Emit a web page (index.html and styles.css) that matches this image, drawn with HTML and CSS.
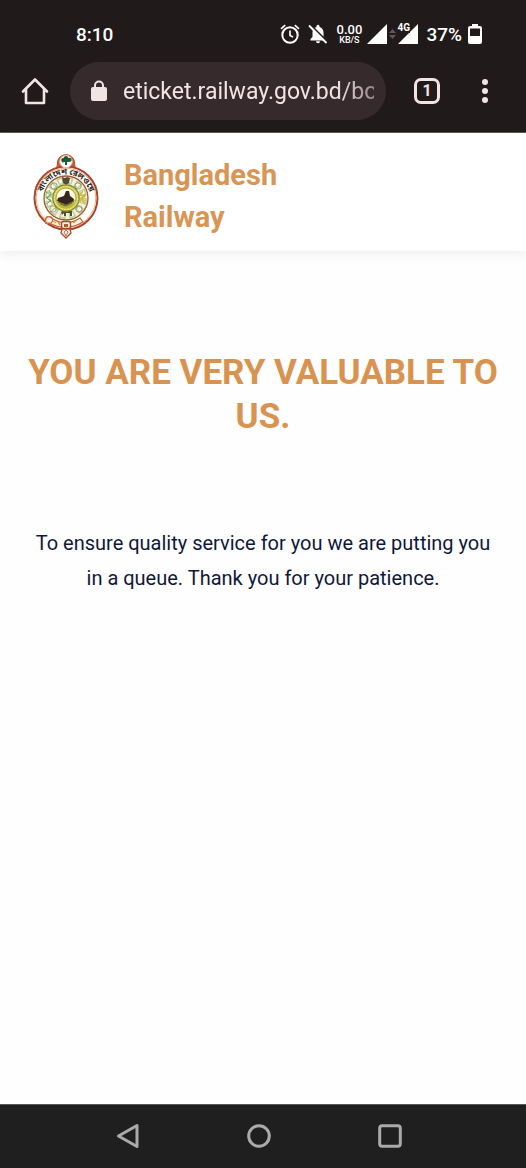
FILE: index.html
```html
<!DOCTYPE html>
<html lang="en">
<head>
<meta charset="utf-8">
<meta name="viewport" content="width=device-width, initial-scale=1">
<title>Bangladesh Railway</title>
<link rel="stylesheet" href="styles.css">
</head>
<body>
<div class="status-bar">
  <time class="clock">8:10</time>
  <div class="indicators">
    <svg class="alarm" width="20" height="20" viewBox="0 0 20 20" fill="none" stroke="currentColor" stroke-width="2"><circle cx="10" cy="11" r="7.7"/><path d="M10 6.5V11.5L13 13M1 4.8L5.2 1.2M19 4.8L14.8 1.2" stroke-width="1.7"/></svg>
    <svg class="bell" width="20" height="20" viewBox="0 0 20 20"><path fill="currentColor" d="M2.5 16.5V15L4.500 13V8.500C4.500 5.500 6 3.700 8.500 3V2.300a1.500 1.500 0 0 1 3 0V3C14 3.700 15.500 5.500 15.500 8.500V13l2 2v1.500zM8 17.300h4a2 2 0 0 1-4 0z"/><path d="M2 0.500L20 18.500" stroke="#211a1b" stroke-width="2"/><path d="M1 1.500L18.500 19" stroke="currentColor" stroke-width="2"/></svg>
    <div class="speed"><span>0.00</span><small>KB/S</small></div>
    <div class="signals">
      <svg width="20" height="20" viewBox="0 0 20 20"><path fill="currentColor" d="M20 0V20H0z"/></svg>
      <svg class="traffic" width="7" height="10" viewBox="0 0 7 10"><path fill="#5f595a" d="M0 4L3.500 0L7 4zM0 6H7L3.500 10z"/></svg>
      <div class="mobile"><svg width="20" height="20" viewBox="0 0 20 20"><path fill="currentColor" d="M20 0V20H0z"/></svg><span class="network">4G</span></div>
    </div>
    <span class="percent">37%</span>
    <svg class="battery" width="14" height="20" viewBox="0 0 14 20"><path fill="currentColor" fill-rule="evenodd" d="M4 0h6v2h2a2 2 0 0 1 2 2v14a2 2 0 0 1-2 2H2a2 2 0 0 1-2-2V4a2 2 0 0 1 2-2h2zM2 4.500V12h10V4.500z"/></svg>
  </div>
</div>
<div class="toolbar">
  <button class="tool home" aria-label="Home"><svg width="28" height="28" viewBox="0 0 28 28" fill="none" stroke="currentColor" stroke-width="2.600" stroke-linejoin="round" stroke-linecap="round"><path d="M2 14.500L14 2.500L26 14.500M5 12V26H23V12"/></svg></button>
  <label class="address">
    <svg width="18" height="22" viewBox="0 0 18 22"><path d="M5 9V5.500a4 4 0 0 1 8 0V9" fill="none" stroke="currentColor" stroke-width="2"/><rect x="1" y="7" width="16" height="14" rx="2" fill="currentColor"/></svg>
    <input class="url" type="text" aria-label="Address" value="eticket.railway.gov.bd/booking">
  </label>
  <button class="tool tabs" aria-label="Open tabs"><span>1</span></button>
  <button class="tool more" aria-label="More options"><svg width="8" height="26" viewBox="0 0 8 26" fill="currentColor"><circle cx="4" cy="4" r="3"/><circle cx="4" cy="13" r="3"/><circle cx="4" cy="22" r="3"/></svg></button>
</div>
<header class="site-header">
  <svg class="logo" width="66" height="88" viewBox="0 0 66 88" role="img" aria-label="Bangladesh Railway emblem">
    <path d="M19 19C25 17 24 14 24.500 9.500a8.700 8.700 0 0 1 17 0C42 14 41 17 47 19z" fill="#c95c35" stroke="#a94a2b"/>
    <circle cx="33" cy="46" r="31.500" fill="#fffefa" stroke="#a8452c" stroke-width="2"/>
    <circle cx="33" cy="46" r="29.800" fill="none" stroke="#eab183"/>
    <circle cx="33" cy="9.500" r="6.300" fill="#fff" stroke="#edb28d"/>
    <path fill="#185d3b" d="M28.500 9a2 2 0 0 1 2-3 2.600 2.600 0 0 1 5 0 2 2 0 0 1 2 3.700L34 10v3h-2v-3l-3 .500z"/>
    <circle cx="33" cy="46" r="22" fill="#f4f1d6" stroke="#9c5b35" stroke-width="1.300"/>
    <circle cx="33" cy="46" r="17.500" fill="none" stroke="#c3cb9f" stroke-width="7" stroke-dasharray="6 3.160"/>
    <circle cx="33" cy="46" r="17.500" fill="none" stroke="#fffbe9" stroke-width="3.500" stroke-dasharray="3 6.160" stroke-dashoffset="-1.500"/>
    <g fill="none" stroke="#789463" stroke-width=".8">
      <circle cx="21" cy="34" r="3.200"/><circle cx="45" cy="34" r="3.200"/><circle cx="20" cy="57" r="3.200"/><circle cx="46" cy="57" r="3.200"/>
      <path stroke="#54a557" d="M13 40l4 3-4 3 5 2-4 4M16 38l2 5-4 3 4 4"/>
      <path stroke="#d0bd35" stroke-width="1.500" d="M50 39l-3 4 5 1-4 4 4 3M53 42l-5 4 4 3"/>
    </g>
    <path fill="#594b32" d="M29 25l3 1 2-1 3 1-1 5-3 2-3-2zM28 60l3-2h5l3 1v5h-2v-3h-4v3h-2v-3l-2 2z"/>
    <circle cx="33" cy="46" r="13.200" fill="#d9ce4e" stroke="#75863a" stroke-width="1.200"/>
    <circle cx="33" cy="46" r="11.500" fill="none" stroke="#f7e77b" stroke-dasharray="2 1"/>
    <circle cx="33" cy="46" r="10" fill="#fff9df" stroke="#8d8b38" stroke-width=".7"/>
    <path d="M24 50Q33 46 42 48Q40 56 32 56Q26 55 24 50z" fill="#aebc35"/>
    <path d="M25 46l6-2 2-5h3l1 5 4 3-1 3-7 3-9-4z" fill="#352520"/>
    <path d="M25 50l8 3 8-4M27 52l6 2 6-3" stroke="#786032" fill="none"/>
    <path id="name-arc" d="M8.500 47A24.500 24.500 0 0 1 57.500 47" fill="none"/>
    <text class="logo-name"><textPath href="#name-arc" startOffset="50%" text-anchor="middle">বাংলাদেশ রেলওয়ে</textPath></text>
    <path d="M13 66Q16 63 20 67Q33 75 47 66L50 70Q33 80 16 71Q10 73 13 66z" fill="#fff4e7" stroke="#c65f37" stroke-width="1.200"/>
    <circle cx="16" cy="68" r="3.500" fill="none" stroke="#c86b3c" stroke-width="1.200"/>
    <path d="M20 69l3 2m2-1l2 3m13-2l3-2" stroke="#d6a32f" stroke-width="1.500"/>
    <rect x="28.500" y="69.500" width="9" height="7" rx="2" fill="#fff1df" stroke="#a9472d" stroke-width="1.500"/>
    <path d="M31 72h4v3h-4z" fill="#b55a38"/>
    <path d="M29 77h8l1 4-5 5-5-5z" fill="#fff3e8" stroke="#a94c31" stroke-width="1.300"/>
    <path d="M31 80l2-2 2 2-2 4z" fill="none" stroke="#ba7354"/>
  </svg>
  <div class="site-name">Bangladesh<br>Railway</div>
</header>
<main class="content">
  <h1>YOU ARE VERY VALUABLE TO US.</h1>
  <p>To ensure quality service for you we are putting you in a queue. Thank you for your patience.</p>
</main>
<nav class="system-nav">
  <button aria-label="Back"><svg width="24" height="26" viewBox="0 0 24 26"><path d="M2.500 13L21 2.500V23.500z"/></svg></button>
  <button aria-label="Home screen"><svg width="24" height="26" viewBox="0 0 24 26"><circle cx="12" cy="13" r="10.300"/></svg></button>
  <button aria-label="Recent apps"><svg width="24" height="26" viewBox="0 0 24 26"><rect x="1.700" y="2.700" width="20.600" height="20.600" rx="2.500"/></svg></button>
</nav>
</body>
</html>
```
FILE: styles.css
```css
* { box-sizing: border-box; }
body {
  margin: 0;
  min-height: 100vh;
  display: flex;
  flex-direction: column;
  background: #fefefe;
  font-family: Roboto, "Liberation Sans", sans-serif;
}
svg { display: block; flex: none; }
button { padding: 0; border: 0; background: none; color: inherit; font: inherit; }
.status-bar {
  display: flex;
  justify-content: space-between;
  align-items: center;
  height: 60px;
  padding: 8px 44px 0 76px;
  background: #211a1b;
  color: #fff;
  font-size: 19px;
  font-weight: 500;
}
.indicators { display: flex; align-items: center; gap: 8px; }
.speed {
  display: flex;
  flex-direction: column;
  align-items: center;
  width: 26px;
  font-size: 13px;
  line-height: 12px;
}
.speed small { font-size: 9px; line-height: 9px; }
.signals { display: flex; align-items: center; gap: 2px; margin-left: -3px; }
.mobile { position: relative; }
.network {
  position: absolute;
  top: -1px;
  left: -1px;
  font-size: 10px;
  font-weight: 700;
  line-height: 10px;
  background: #211a1b;
}
.battery { margin-left: -2px; }
.toolbar {
  display: flex;
  align-items: center;
  height: 73px;
  padding: 0 20px 11px;
  background: #211a1b;
  border-bottom: 1px solid #5d5758;
  color: #f3e3e5;
}
.tool { display: grid; place-items: center; flex: none; height: 48px; }
.home { width: 30px; }
.address {
  flex: 1;
  min-width: 0;
  display: flex;
  align-items: center;
  gap: 15px;
  height: 58px;
  margin-left: 20px;
  padding: 0 12px 0 20px;
  border-radius: 29px;
  background: #372a2c;
}
.url {
  flex: 1;
  min-width: 0;
  height: 32px;
  padding: 2px 0 0;
  border: 0;
  background: none;
  color: inherit;
  font: 23px Roboto, "Liberation Sans", sans-serif;
  mask-image: linear-gradient(to right, #000 85%, rgba(0, 0, 0, 0.5));
}
.tabs { width: 26px; margin-left: 28px; }
.tabs span {
  display: grid;
  place-items: center;
  width: 26px;
  height: 26px;
  border: 3px solid;
  border-radius: 7px;
  font-size: 16px;
  font-weight: 700;
  line-height: 20px;
}
.more { width: 26px; margin: 0 8px 0 32px; }
.site-header {
  display: flex;
  align-items: center;
  gap: 25px;
  height: 118px;
  padding: 7px 33px 0;
  background: #fff;
  box-shadow: 0 4px 10px rgba(0, 0, 0, 0.06);
}
.logo-name { font: 700 8px "Noto Sans Bengali", "Noto Sans", sans-serif; fill: #302520; }
.site-name { color: #d89554; font-size: 29px; font-weight: 700; line-height: 42px; }
.content { flex: 1; padding: 100px 24px 0; text-align: center; }
.content h1 { margin: 0; color: #d89350; font-size: 35px; font-weight: 700; line-height: 44px; }
.content p { margin: 87px 0 0; padding: 0 8px; color: #10183a; font-size: 20px; line-height: 35px; }
.system-nav {
  display: flex;
  justify-content: center;
  align-items: center;
  gap: 107px;
  height: 64px;
  padding: 0 9px 2px 0;
  background: #1f1f1f;
  border-top: 1px solid #555;
}
.system-nav svg { fill: none; stroke: #aaa; stroke-width: 3; stroke-linejoin: round; }
```
